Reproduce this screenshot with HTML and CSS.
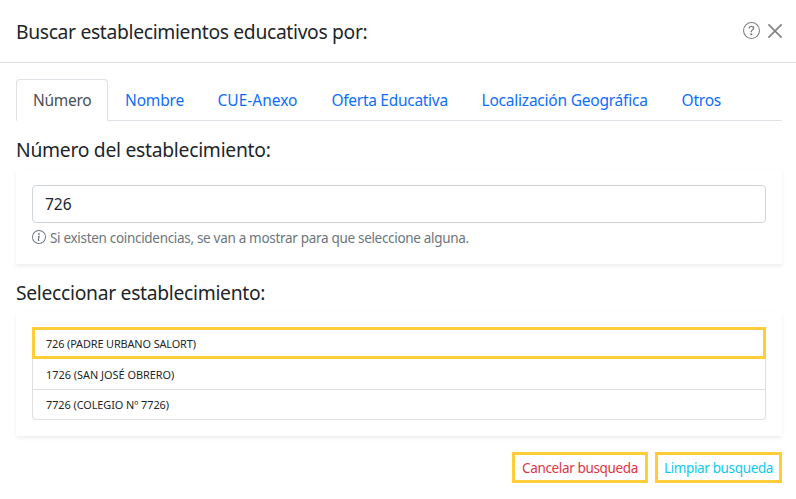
FILE: index.html
```html
<!DOCTYPE html>
<html lang="es">
<head>
<meta charset="utf-8">
<title>Buscar establecimientos</title>
<link rel="stylesheet" href="styles.css">
</head>
<body>
<header class="header">
  <h1 class="title"><span class="t-title">Buscar establecimientos educativos por:</span></h1>
  <div class="actions">
    <svg class="help" viewBox="0 0 16 16" fill="currentColor"><path d="M8 15A7 7 0 1 1 8 1a7 7 0 0 1 0 14zm0 1A8 8 0 1 0 8 0a8 8 0 0 0 0 16z"/><path d="M5.255 5.786a.237.237 0 0 0 .241.247h.825c.138 0 .248-.113.266-.25.09-.656.54-1.134 1.342-1.134.686 0 1.314.343 1.314 1.168 0 .635-.374.927-.965 1.371-.673.489-1.206 1.06-1.168 1.987l.003.217a.25.25 0 0 0 .25.246h.811a.25.25 0 0 0 .25-.25v-.105c0-.718.273-.927 1.01-1.486.609-.463 1.244-.977 1.244-2.056 0-1.511-1.276-2.241-2.673-2.241-1.267 0-2.655.59-2.75 2.286zm1.557 5.763c0 .533.425.927 1.01.927.609 0 1.028-.394 1.028-.927 0-.552-.42-.94-1.029-.94-.584 0-1.009.388-1.009.94z"/></svg>
    <svg class="close" viewBox="0 0 14 14" fill="none" stroke="currentColor" stroke-width="1.6" stroke-linecap="round"><path d="M.9.9l12.2 12.2M13.1.9L.9 13.1"/></svg>
  </div>
</header>
<main class="body">
  <nav class="tabs">
    <a class="tab active t-numero">Número</a>
    <a class="tab t-nombre">Nombre</a>
    <a class="tab t-cue">CUE-Anexo</a>
    <a class="tab t-oferta">Oferta Educativa</a>
    <a class="tab t-geo">Localización Geográfica</a>
    <a class="tab t-otros">Otros</a>
  </nav>
  <h2 class="section-title"><span class="t-section">Número del establecimiento:</span></h2>
  <section class="card search-card">
    <div class="input">726</div>
    <div class="hint">
      <svg class="info" viewBox="0 0 16 16" fill="currentColor"><path d="M8 15A7 7 0 1 1 8 1a7 7 0 0 1 0 14zm0 1A8 8 0 1 0 8 0a8 8 0 0 0 0 16z"/><path d="m8.93 6.588-2.29.287-.082.38.45.083c.294.07.352.176.288.469l-.738 3.468c-.194.897.105 1.319.808 1.319.545 0 1.178-.252 1.465-.598l.088-.416c-.2.176-.492.246-.686.246-.275 0-.375-.193-.304-.533L8.93 6.588zM9 4.5a1 1 0 1 1-2 0 1 1 0 0 1 2 0z"/></svg>
      <span class="t-hint">Si existen coincidencias, se van a mostrar para que seleccione alguna.</span>
    </div>
  </section>
  <h2 class="section-title second"><span class="t-section2">Seleccionar establecimiento:</span></h2>
  <section class="card list-card">
    <ul class="list">
      <li class="item selected"><span class="t-i1">726 (PADRE URBANO SALORT)</span></li>
      <li class="item"><span class="t-i2">1726 (SAN JOSÉ OBRERO)</span></li>
      <li class="item last"><span class="t-i3">7726 (COLEGIO Nº 7726)</span></li>
    </ul>
  </section>
  <footer class="footer">
    <button class="btn cancel">Cancelar busqueda</button>
    <button class="btn clear">Limpiar busqueda</button>
  </footer>
</main>
</body>
</html>
```
FILE: styles.css
```css
* { box-sizing: border-box; }
body {
  margin: 0;
  background: #fff;
  color: #212529;
  font-family: "Noto Sans", "Open Sans", sans-serif;
  font-size: 15.5px;
  line-height: 24px;
}
.header {
  height: 63px;
  padding: 0 14px 0 16px;
  border-bottom: 1px solid #dee2e6;
  display: flex;
  align-items: center;
  justify-content: space-between;
}
.title, .section-title {
  margin: 0;
  font-size: 19.3px;
  font-weight: 400;
  line-height: 24px;
  white-space: nowrap;
}
.title { padding-top: 2px; }
.t-title { letter-spacing: -.33px; }
.t-section { letter-spacing: -.27px; }
.t-section2 { letter-spacing: -.3px; }
.actions { display: flex; align-items: center; gap: 8px; color: #7f7f7f; }
.help { width: 17px; height: 17px; margin-top: -2px; }
.close { width: 14px; height: 14px; }
.body { padding: 16px 14px 0 16px; }
.tabs { display: flex; height: 42px; border-bottom: 1px solid #dee2e6; }
.tab {
  height: 42px;
  padding: 8px 16px;
  border: 1px solid transparent;
  border-radius: 4px 4px 0 0;
  color: #0d6efd;
  white-space: nowrap;
}
.tab.active { color: #495057; background: #fff; border-color: #dee2e6 #dee2e6 #fff; }
.t-numero { width: 92px; letter-spacing: -.3px; }
.t-nombre { width: 92.5px; letter-spacing: -.15px; }
.t-cue { width: 114px; }
.t-oferta { width: 150px; letter-spacing: -.29px; }
.t-geo { width: 200px; letter-spacing: -.22px; }
.t-otros { width: 74px; letter-spacing: -.2px; }
.section-title { margin-top: 17px; margin-bottom: 7px; }
.card { background: #fff; padding: 16px; box-shadow: 0 2px 4px rgba(0, 0, 0, .075); }
.search-card { height: 95px; }
.input {
  height: 38px;
  border: 1px solid #ced4da;
  border-radius: 4px;
  padding: 6px 12px;
}
.hint {
  display: flex;
  align-items: center;
  gap: 4px;
  height: 21px;
  margin-top: 4px;
  color: #6c757d;
  font-size: 13.5px;
  letter-spacing: -.31px;
  white-space: nowrap;
}
.info { width: 14px; height: 14px; margin-top: -2px; }
.list-card { height: 124px; padding-top: 15px; }
.list { list-style: none; margin: 0; padding: 0; font-size: 10.9px; }
.item {
  height: 31px;
  padding: 0 13px;
  border: 1px solid #dfdfdf;
  border-top: 0;
  line-height: 31px;
  white-space: nowrap;
}
.item.selected { height: 32px; border: 3px solid #ffcd39; padding: 0 11px; line-height: 27px; }
.item.last { height: 30px; line-height: 29px; border-radius: 0 0 4px 4px; }
.t-i1 { letter-spacing: -.12px; }
.t-i3 { letter-spacing: -.06px; }
.footer { display: flex; justify-content: flex-end; gap: 7px; margin-top: 16px; }
.btn {
  height: 31px;
  padding: 1px 0 0;
  background: #fff;
  border: 3px solid #ffcd39;
  font: 13.5px/24px "Noto Sans", "Open Sans", sans-serif;
  letter-spacing: -.36px;
  white-space: nowrap;
}
.cancel { width: 136px; color: #dc3545; }
.clear { width: 127px; color: #0dcaf0; }
```
